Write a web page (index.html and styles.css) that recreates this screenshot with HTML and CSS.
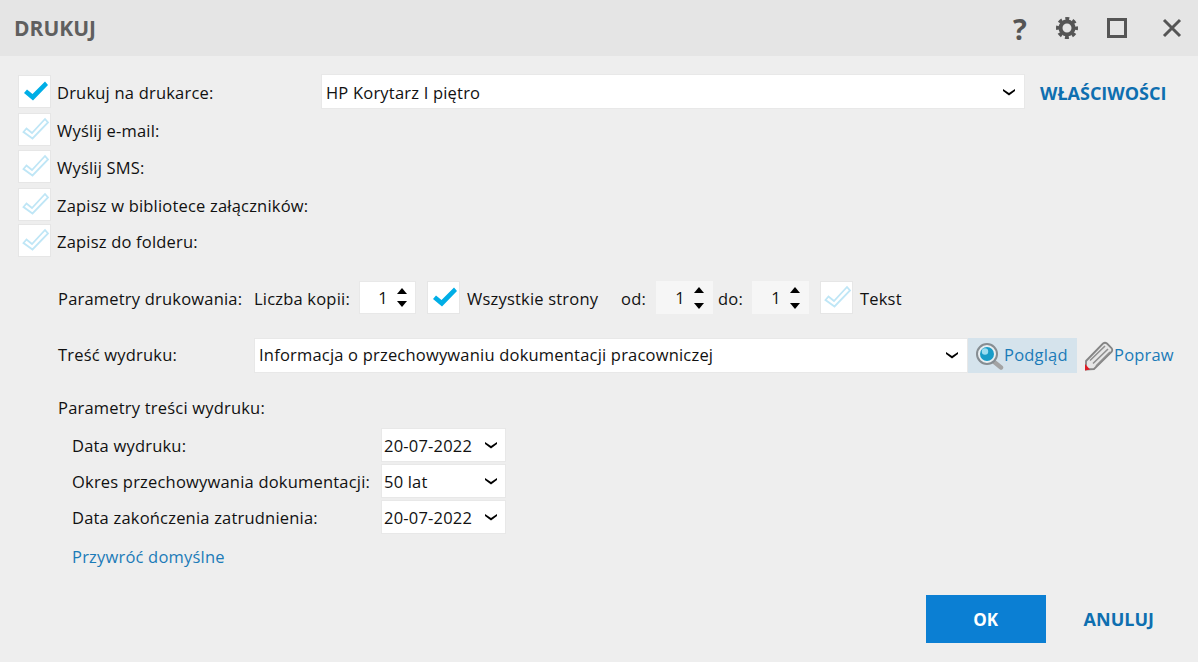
FILE: index.html
```html
<!DOCTYPE html>
<html lang="pl">
<head>
    <meta charset="UTF-8">
    <title>Drukuj</title>
    <link rel="stylesheet" href="styles.css">
</head>
<body>
    <svg class="defs" width="0" height="0">
        <symbol id="check-on" viewBox="0 0 33 33">
            <polygon points="6,18 9,14.5 14.5,19 27,6.5 30,10 15,25.5" fill="#00aee6"/>
        </symbol>
        <symbol id="check-off" viewBox="0 0 33 33">
            <polygon points="5.5,19 8.5,15.5 14,20 27,6 30,9.5 14.5,25.5" fill="none" stroke="#bfe6f6" stroke-width="1.8"/>
        </symbol>
        <symbol id="chevron" viewBox="0 0 14 8">
            <path d="M1 1 L7 5 L13 1 L13 3 L7 7.5 L1 3 Z" fill="#000"/>
        </symbol>
    </svg>

    <div class="dialog">
        <header class="titlebar">
            <h1>DRUKUJ</h1>
            <div class="window-icons">
                <span class="help">?</span>
                <svg width="24" height="24" viewBox="0 0 24 24">
                    <circle cx="12" cy="12" r="6.5" fill="none" stroke="#555" stroke-width="4"/>
                    <circle cx="12" cy="12" r="9.5" fill="none" stroke="#555" stroke-width="3" stroke-dasharray="4 3.46" stroke-dashoffset="2"/>
                </svg>
                <svg width="22" height="22" viewBox="0 0 22 22">
                    <rect x="2.5" y="2.5" width="17" height="17" fill="none" stroke="#555" stroke-width="3"/>
                </svg>
                <svg class="close-icon" width="22" height="22" viewBox="0 0 22 22">
                    <path d="M3 3 L19 19 M19 3 L3 19" fill="none" stroke="#555" stroke-width="3"/>
                </svg>
            </div>
        </header>

        <main class="content">
            <section class="targets">
                <div class="target">
                    <span class="check"><svg><use href="#check-on"/></svg></span>
                    <label class="target-label">Drukuj na drukarce:</label>
                    <div class="select printer-select">
                        <span>HP Korytarz I piętro</span>
                        <svg class="chevron"><use href="#chevron"/></svg>
                    </div>
                    <a class="props-link">WŁAŚCIWOŚCI</a>
                </div>
                <div class="target">
                    <span class="check"><svg><use href="#check-off"/></svg></span>
                    <label class="target-label">Wyślij e-mail:</label>
                </div>
                <div class="target">
                    <span class="check"><svg><use href="#check-off"/></svg></span>
                    <label class="target-label">Wyślij SMS:</label>
                </div>
                <div class="target">
                    <span class="check"><svg><use href="#check-off"/></svg></span>
                    <label class="target-label">Zapisz w bibliotece załączników:</label>
                </div>
                <div class="target">
                    <span class="check"><svg><use href="#check-off"/></svg></span>
                    <label class="target-label">Zapisz do folderu:</label>
                </div>
            </section>

            <section class="print-params">
                <span class="col-label">Parametry drukowania:</span>
                <span class="copies-label">Liczba kopii:</span>
                <div class="spinner">
                    <span class="value">1</span>
                    <span class="arrows"><i class="up"></i><i class="down"></i></span>
                </div>
                <span class="check all-pages"><svg><use href="#check-on"/></svg></span>
                <span class="all-pages-label">Wszystkie strony</span>
                <span class="from-label">od:</span>
                <div class="spinner off">
                    <span class="value">1</span>
                    <span class="arrows"><i class="up"></i><i class="down"></i></span>
                </div>
                <span class="to-label">do:</span>
                <div class="spinner off">
                    <span class="value">1</span>
                    <span class="arrows"><i class="up"></i><i class="down"></i></span>
                </div>
                <span class="check text-check"><svg><use href="#check-off"/></svg></span>
                <span class="text-label">Tekst</span>
            </section>

            <section class="print-content">
                <span class="col-label">Treść wydruku:</span>
                <div class="select content-select">
                    <span>Informacja o przechowywaniu dokumentacji pracowniczej</span>
                    <svg class="chevron"><use href="#chevron"/></svg>
                </div>
                <a class="tool-btn preview">
                    <svg width="28" height="30" viewBox="0 0 28 30">
                        <line x1="17" y1="20" x2="25" y2="26.5" stroke="#a3a3a3" stroke-width="4.4" stroke-linecap="round"/>
                        <circle cx="11" cy="13" r="10" fill="#e8eef1" stroke="#868d92" stroke-width="2"/>
                        <circle cx="11" cy="13" r="7" fill="#189cc8"/>
                        <circle cx="9" cy="10.5" r="3.2" fill="#9adcf0"/>
                    </svg>
                    <span class="tool-text">Podgląd</span>
                </a>
                <a class="tool-btn fix">
                    <svg width="30" height="30" viewBox="0 0 30 30">
                        <path d="M2 20 L19 2.5 Q21 1 23 2.5 L27.5 7 Q29 9 27.5 11 L10 28 L2 28.5 Z" fill="#e6e6e6" stroke="#858585" stroke-width="1.8"/>
                        <path d="M6 19.5 L21 5 M9 22.5 L24 8 M12 25 L26 11" stroke="#8f8f8f" stroke-width="1.6"/>
                        <path d="M1 23 L6 28.5 L1 29.5 Z" fill="#e01b24"/>
                    </svg>
                    <span class="tool-text">Popraw</span>
                </a>
            </section>

            <section class="content-params">
                <p class="params-title">Parametry treści wydruku:</p>
                <div class="param-row">
                    <span class="param-label">Data wydruku:</span>
                    <div class="select small-select">
                        <span>20-07-2022</span>
                        <svg class="chevron"><use href="#chevron"/></svg>
                    </div>
                </div>
                <div class="param-row">
                    <span class="param-label">Okres przechowywania dokumentacji:</span>
                    <div class="select small-select">
                        <span>50 lat</span>
                        <svg class="chevron"><use href="#chevron"/></svg>
                    </div>
                </div>
                <div class="param-row">
                    <span class="param-label">Data zakończenia zatrudnienia:</span>
                    <div class="select small-select">
                        <span>20-07-2022</span>
                        <svg class="chevron"><use href="#chevron"/></svg>
                    </div>
                </div>
                <a class="restore-link">Przywróć domyślne</a>
            </section>
        </main>

        <footer class="actions">
            <button class="ok-btn">OK</button>
            <a class="cancel-link">ANULUJ</a>
        </footer>
    </div>
</body>
</html>
```

FILE: styles.css
```css
* {
    box-sizing: border-box;
}
body {
    margin: 0;
    background: #eeeeee;
    color: #111;
    font-family: 'Open Sans', sans-serif;
    font-size: 16.5px;
    letter-spacing: 0.2px;
}
.defs {
    display: block;
}
.dialog {
    width: 1198px;
    height: 662px;
    overflow: hidden;
}

/* title bar */
.titlebar {
    height: 56px;
    background: #e5e5e5;
    display: flex;
    align-items: center;
    justify-content: space-between;
    padding: 0 15px 0 14px;
}
h1 {
    margin: 0;
    font-size: 21px;
    font-weight: 700;
    color: #5f5f5f;
    letter-spacing: 0;
}
.window-icons {
    display: flex;
    align-items: center;
    gap: 27px;
}
.close-icon {
    margin-left: 6px;
}
.help {
    font-size: 29px;
    font-weight: 700;
    color: #555;
    line-height: 1;
    width: 16px;
    text-align: center;
    letter-spacing: 0;
}

.content {
    padding: 19px 0 0 18px;
}

/* checkbox rows */
.check {
    display: block;
    flex: none;
    width: 33px;
    height: 33px;
    background: #fff;
    border: 1px solid #e6e6e6;
}
.check svg {
    display: block;
    width: 33px;
    height: 33px;
    margin: -1px;
}
.targets {
    display: flex;
    flex-direction: column;
}
.target {
    display: flex;
    align-items: center;
    height: 33px;
    margin-bottom: 5px;
}
.target:nth-child(2) {
    margin-bottom: 4px;
}
.target:nth-child(4) {
    margin-bottom: 3px;
}
.target:last-child {
    margin-bottom: 0;
}
.target-label {
    margin-left: 6px;
    padding-top: 2px;
    width: 264px;
    white-space: nowrap;
}
.select {
    display: flex;
    align-items: center;
    justify-content: space-between;
    background: #fff;
    border: 1px solid #e8e8e8;
    padding: 0 8px 0 4px;
    white-space: nowrap;
}
.chevron {
    width: 14px;
    height: 8px;
    flex: none;
}
.printer-select {
    width: 704px;
    height: 35px;
    padding-top: 1px;
}
.props-link {
    margin-left: 15px;
    padding-top: 2px;
    font-weight: 700;
    color: #0e6fb0;
    font-size: 18px;
    letter-spacing: 0;
}

/* print parameters */
.print-params {
    display: flex;
    align-items: center;
    height: 33px;
    margin-top: 24px;
    padding-left: 40px;
}
.print-params > span:not(.check) {
    padding-top: 1px;
}
.col-label {
    width: 196px;
    flex: none;
    white-space: nowrap;
}
.copies-label {
    width: 105px;
    flex: none;
}
.spinner {
    width: 57px;
    height: 33px;
    flex: none;
    background: #fff;
    border: 1px solid #e8e8e8;
    display: flex;
    align-items: center;
    justify-content: flex-end;
    padding-right: 8px;
    gap: 9px;
}
.spinner.off {
    background: #f6f6f6;
    border-color: #f6f6f6;
}
.spinner.off .arrows {
    gap: 10px;
}
.arrows {
    display: flex;
    flex-direction: column;
    gap: 7px;
}
.arrows i {
    display: block;
    width: 0;
    height: 0;
    border-left: 5.5px solid transparent;
    border-right: 5.5px solid transparent;
}
.arrows .up {
    border-bottom: 6px solid #000;
}
.arrows .down {
    border-top: 6px solid #000;
}
.all-pages {
    margin-left: 11px;
}
.all-pages-label {
    margin-left: 7px;
    width: 154px;
    flex: none;
}
.from-label {
    width: 35px;
    flex: none;
}
.to-label {
    width: 39px;
    flex: none;
    padding-left: 5px;
}
.text-check {
    margin-left: 11px;
}
.text-label {
    margin-left: 7px;
}

/* print content */
.print-content {
    display: flex;
    align-items: center;
    height: 35px;
    margin-top: 24px;
    padding-left: 40px;
}
.content-select {
    width: 714px;
    height: 35px;
    padding-bottom: 2px;
}
.print-content .col-label {
    padding-bottom: 2px;
}
.tool-btn {
    display: flex;
    align-items: center;
    color: #1b7bb8;
    height: 35px;
}
.tool-text {
    padding-bottom: 3px;
}
.preview {
    width: 109px;
    background: #d5e3ec;
    padding-left: 8px;
}
.fix {
    margin-left: 7px;
}

/* content parameters */
.content-params {
    padding-left: 40px;
}
.params-title {
    margin: 24px 0 9px;
    line-height: 22px;
}
.param-row {
    display: flex;
    align-items: center;
    height: 34px;
    margin-bottom: 2px;
    padding-left: 14px;
}
.param-label {
    width: 309px;
    flex: none;
    white-space: nowrap;
}
.small-select {
    width: 125px;
    height: 34px;
    padding: 0 7px 0 2px;
}
.restore-link {
    display: block;
    margin: 12px 0 0 14px;
    line-height: 22px;
    color: #1b7bb8;
}

/* bottom buttons */
.actions {
    display: flex;
    align-items: center;
    justify-content: flex-end;
    padding-right: 44px;
    margin-top: 27px;
}
.ok-btn {
    width: 120px;
    height: 48px;
    border: none;
    background: #0b7fd3;
    color: #fff;
    font-family: inherit;
    font-size: 17px;
    font-weight: 700;
}
.cancel-link {
    margin-left: 38px;
    font-weight: 700;
    font-size: 18px;
    letter-spacing: 0;
    color: #0e6fb0;
}
```
